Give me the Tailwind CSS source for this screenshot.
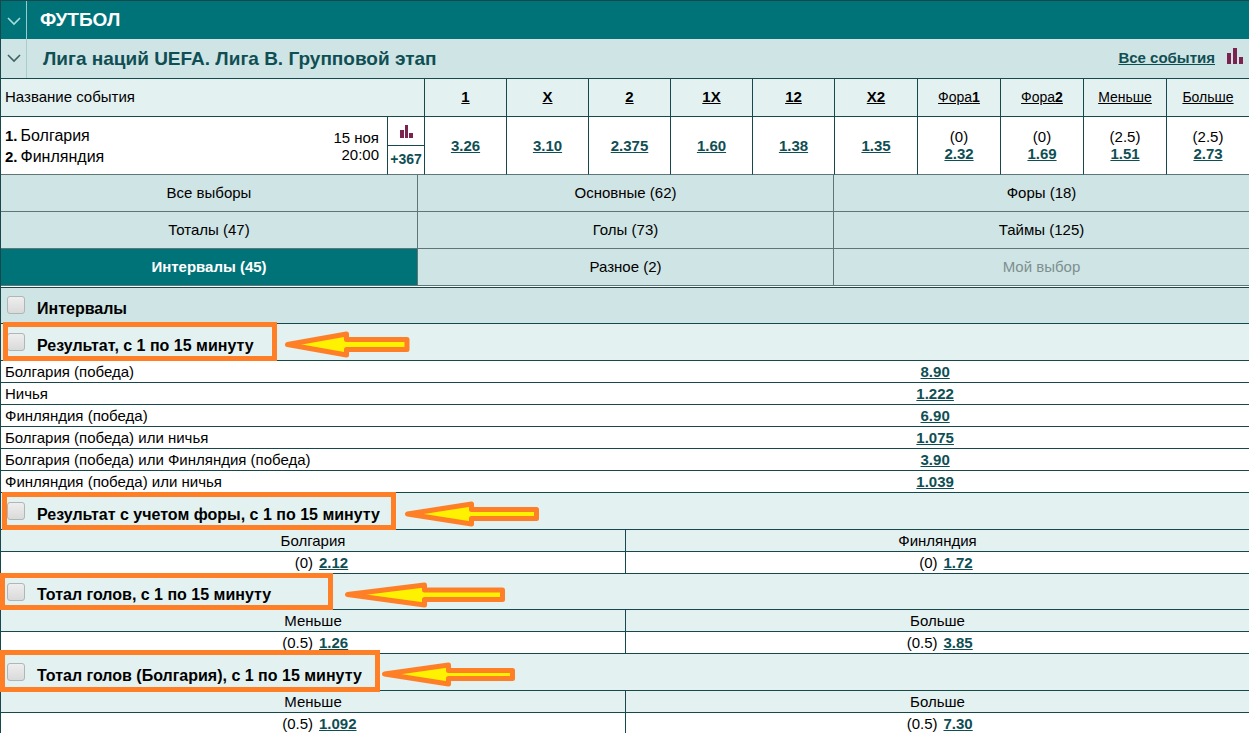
<!DOCTYPE html>
<html lang="ru">
<head>
<meta charset="utf-8">
<meta name="viewport" content="width=device-width, initial-scale=1">
<title>Футбол — Лига наций UEFA</title>
<script src="https://cdn.jsdelivr.net/npm/@tailwindcss/browser@4"></script>
</head>
<body class="bg-white font-['Liberation_Sans',Arial,sans-serif] text-[15px] leading-[17px] text-black">
<main class="border-l border-t border-[#17484b]">

  <header class="flex h-[38px] items-stretch bg-[#007378] text-white">
    <button type="button" aria-label="Свернуть футбол" class="flex w-[26px] items-center justify-center border-r border-[#9cc9cb]">
      <svg class="mt-0.5 h-[9px] w-[14px]" viewBox="0 0 14 9" fill="none" stroke="#a9dcdc" stroke-width="1.6"><path d="M1 1l6 6 6-6"/></svg>
    </button>
    <h1 class="flex items-center pb-0.5 pl-[13px] text-[19px] font-bold">ФУТБОЛ</h1>
  </header>

  <div class="flex h-10 items-stretch border-b border-[#17484b] bg-[#cfe4e4]">
    <button type="button" aria-label="Свернуть лигу" class="flex w-[26px] items-center justify-center border-r border-[#a9cccc]">
      <svg class="h-[9px] w-[14px]" viewBox="0 0 14 9" fill="none" stroke="#3f6265" stroke-width="1.6"><path d="M1 1l6 6 6-6"/></svg>
    </button>
    <h2 class="flex flex-1 items-center pl-4 text-[19px] font-bold text-[#0f4f54]">Лига наций UEFA. Лига B. Групповой этап</h2>
    <div class="flex items-center gap-3 pb-0.5 pr-1.5">
      <a href="#" class="font-bold text-[#0f4f54] underline">Все события</a>
      <svg class="mb-1 h-4 w-4" viewBox="0 0 16 16" fill="#7b2350"><path d="M0 5h4v11H0zM6 0h4v16H6zM12 9h4v7h-4z"/></svg>
    </div>
  </div>

  <table class="w-full table-fixed border-separate border-spacing-0 text-center">
    <colgroup>
      <col><col class="w-[37px]">
      <col class="w-[82px]"><col class="w-[82px]"><col class="w-[82px]"><col class="w-[82px]"><col class="w-[82px]">
      <col class="w-[83px]"><col class="w-[83px]"><col class="w-[83px]"><col class="w-[83px]"><col class="w-[83px]">
    </colgroup>
    <thead>
      <tr class="h-[38px] bg-[#e4f1f1] *:border-b *:border-[#17484b] *:pb-0.5 *:font-normal">
        <th colspan="2" class="pl-1 text-left">Название события</th>
        <th class="border-l"><a href="#" class="font-bold underline">1</a></th>
        <th class="border-l"><a href="#" class="font-bold underline">X</a></th>
        <th class="border-l"><a href="#" class="font-bold underline">2</a></th>
        <th class="border-l"><a href="#" class="font-bold underline">1X</a></th>
        <th class="border-l"><a href="#" class="font-bold underline">12</a></th>
        <th class="border-l"><a href="#" class="font-bold underline">X2</a></th>
        <th class="border-l"><a href="#" class="text-[14px] underline">Фора<b>1</b></a></th>
        <th class="border-l"><a href="#" class="text-[14px] underline">Фора<b>2</b></a></th>
        <th class="border-l"><a href="#" class="text-[14px] underline">Меньше</a></th>
        <th class="border-l"><a href="#" class="text-[14px] underline">Больше</a></th>
      </tr>
    </thead>
    <tbody>
      <tr class="h-[58px] *:border-b *:border-l *:border-b-[#5f7576] *:border-l-[#17484b]">
        <td class="border-l-0! pl-1 pr-2">
          <div class="flex items-center justify-between">
            <div class="text-left leading-[21px]">
              <div class="flex gap-[3px]"><b>1.</b><span class="text-[16px]">Болгария</span></div>
              <div class="flex gap-[3px]"><b>2.</b><span class="text-[16px]">Финляндия</span></div>
            </div>
            <div class="text-right">15 ноя<br>20:00</div>
          </div>
        </td>
        <td>
          <div class="flex h-[29px] items-center justify-center border-b border-[#17484b]">
            <svg class="h-[13px] w-[13px]" viewBox="0 0 13 13" fill="#7b2350"><path d="M0 5h4v8H0zM5 0h3v13H5zM9 8h4v5H9z"/></svg>
          </div>
          <a href="#" class="flex h-7 items-center justify-center pb-0.5 text-[14px] font-bold text-[#0f4f54]">+367</a>
        </td>
        <td><a href="#" class="font-bold text-[#0f4f54] underline">3.26</a></td>
        <td><a href="#" class="font-bold text-[#0f4f54] underline">3.10</a></td>
        <td><a href="#" class="font-bold text-[#0f4f54] underline">2.375</a></td>
        <td><a href="#" class="font-bold text-[#0f4f54] underline">1.60</a></td>
        <td><a href="#" class="font-bold text-[#0f4f54] underline">1.38</a></td>
        <td><a href="#" class="font-bold text-[#0f4f54] underline">1.35</a></td>
        <td class="pb-0.5">(0)<br><a href="#" class="font-bold text-[#0f4f54] underline">2.32</a></td>
        <td class="pb-0.5">(0)<br><a href="#" class="font-bold text-[#0f4f54] underline">1.69</a></td>
        <td class="pb-0.5">(2.5)<br><a href="#" class="font-bold text-[#0f4f54] underline">1.51</a></td>
        <td class="pb-0.5">(2.5)<br><a href="#" class="font-bold text-[#0f4f54] underline">2.73</a></td>
      </tr>
    </tbody>
  </table>

  <nav class="grid grid-cols-3 bg-[#cfe4e4] *:h-[37px] *:border-b *:border-[#5f7576] *:pb-0.5">
    <button type="button">Все выборы</button>
    <button type="button" class="border-l">Основные (62)</button>
    <button type="button" class="border-l">Форы (18)</button>
    <button type="button">Тоталы (47)</button>
    <button type="button" class="border-l">Голы (73)</button>
    <button type="button" class="border-l">Таймы (125)</button>
    <button type="button" class="bg-[#007378] font-bold text-white">Интервалы (45)</button>
    <button type="button" class="border-l">Разное (2)</button>
    <button type="button" disabled class="border-l text-[#7d8f8f]">Мой выбор</button>
  </nav>

  <section class="mt-px border-t border-[#17484b]">
    <div class="flex h-9 items-center gap-3 border-b border-[#17484b] bg-[#cfe4e4] pl-1.5">
      <input id="s0" type="checkbox" class="mb-0.5 size-[18px] appearance-none rounded-[3px] border border-[#b0b5b5] bg-linear-to-b from-[#eeeeee] to-[#dadada]">
      <label for="s0" class="pt-1.5 text-[16px] font-bold">Интервалы</label>
    </div>
  </section>

  <section>
    <div class="relative flex h-[37px] items-center gap-3 border-b border-[#17484b] bg-[#e4f1f1] pl-1.5">
      <input id="s1" type="checkbox" class="size-[18px] appearance-none rounded-[3px] border border-[#b0b5b5] bg-linear-to-b from-[#eeeeee] to-[#dadada]">
      <label for="s1" class="pt-1.5 text-[16px] font-bold">Результат, с 1 по 15 минуту</label>
      <div class="pointer-events-none absolute -top-0.5 left-0.5 z-10 h-[39px] w-[274px] border-5 border-[#ff7f27]"></div>
      <svg class="absolute left-[284px] top-[7px] z-10 h-[27px] w-[125px]" viewBox="0 0 125 27" fill="#fff200" stroke="#ff7f27" stroke-width="5" stroke-linejoin="round"><path d="M2.5 13.5L61.500 3V8.500H122V18.500H61.500V24z"/></svg>
    </div>
    <table class="w-full table-fixed border-separate border-spacing-0">
      <colgroup><col><col class="w-[50.3%]"></colgroup>
      <tbody class="*:h-[22px] *:*:border-b *:*:border-[#17484b]">
        <tr><td class="pl-1">Болгария (победа)</td><td class="text-center"><a href="#" class="font-bold text-[#0f4f54] underline">8.90</a></td></tr>
        <tr><td class="pl-1">Ничья</td><td class="text-center"><a href="#" class="font-bold text-[#0f4f54] underline">1.222</a></td></tr>
        <tr><td class="pl-1">Финляндия (победа)</td><td class="text-center"><a href="#" class="font-bold text-[#0f4f54] underline">6.90</a></td></tr>
        <tr><td class="pl-1">Болгария (победа) или ничья</td><td class="text-center"><a href="#" class="font-bold text-[#0f4f54] underline">1.075</a></td></tr>
        <tr><td class="pl-1">Болгария (победа) или Финляндия (победа)</td><td class="text-center"><a href="#" class="font-bold text-[#0f4f54] underline">3.90</a></td></tr>
        <tr><td class="pl-1">Финляндия (победа) или ничья</td><td class="text-center"><a href="#" class="font-bold text-[#0f4f54] underline">1.039</a></td></tr>
      </tbody>
    </table>
  </section>

  <section>
    <div class="relative flex h-[37px] items-center gap-3 border-b border-[#17484b] bg-[#e4f1f1] pl-1.5">
      <input id="s2" type="checkbox" class="size-[18px] appearance-none rounded-[3px] border border-[#b0b5b5] bg-linear-to-b from-[#eeeeee] to-[#dadada]">
      <label for="s2" class="pt-1.5 text-[16px] font-bold">Результат с учетом форы, с 1 по 15 минуту</label>
      <div class="pointer-events-none absolute -top-px left-px z-10 h-[38px] w-[394px] border-5 border-[#ff7f27]"></div>
      <svg class="absolute left-[404px] top-2 z-10 h-[26px] w-[135px]" viewBox="0 0 135 26" fill="#fff200" stroke="#ff7f27" stroke-width="5" stroke-linejoin="round"><path d="M2.5 13L66.500 3V8.500H131.500V17.500H66.500V23z"/></svg>
    </div>
    <table class="w-full table-fixed border-separate border-spacing-0 text-center">
      <thead><tr class="h-[22px] bg-[#e4f1f1] *:border-b *:border-[#17484b] *:font-normal"><th>Болгария</th><th class="border-l">Финляндия</th></tr></thead>
      <tbody><tr class="h-[22px] *:border-b *:border-[#17484b]">
        <td><div class="grid grid-cols-2"><span class="text-right">(0)</span><span class="pl-1.5 text-left"><a href="#" class="font-bold text-[#0f4f54] underline">2.12</a></span></div></td>
        <td class="border-l"><div class="grid grid-cols-2"><span class="text-right">(0)</span><span class="pl-1.5 text-left"><a href="#" class="font-bold text-[#0f4f54] underline">1.72</a></span></div></td>
      </tr></tbody>
    </table>
  </section>

  <section>
    <div class="relative flex h-9 items-center gap-3 border-b border-[#17484b] bg-[#e4f1f1] pl-1.5">
      <input id="s3" type="checkbox" class="size-[18px] appearance-none rounded-[3px] border border-[#b0b5b5] bg-linear-to-b from-[#eeeeee] to-[#dadada]">
      <label for="s3" class="pt-1.5 text-[16px] font-bold">Тотал голов, с 1 по 15 минуту</label>
      <div class="pointer-events-none absolute -left-px -top-px z-10 h-[37px] w-[333px] border-5 border-[#ff7f27]"></div>
      <svg class="absolute left-[344px] top-2 z-10 h-[26px] w-[160px]" viewBox="0 0 160 26" fill="#fff200" stroke="#ff7f27" stroke-width="5" stroke-linejoin="round"><path d="M2.5 12.500L79.500 3V8H157.500V17.500H79.500V23z"/></svg>
    </div>
    <table class="w-full table-fixed border-separate border-spacing-0 text-center">
      <thead><tr class="h-[22px] bg-[#e4f1f1] *:border-b *:border-[#17484b] *:font-normal"><th>Меньше</th><th class="border-l">Больше</th></tr></thead>
      <tbody><tr class="h-[22px] *:border-b *:border-[#17484b]">
        <td><div class="grid grid-cols-2"><span class="text-right">(0.5)</span><span class="pl-1.5 text-left"><a href="#" class="font-bold text-[#0f4f54] underline">1.26</a></span></div></td>
        <td class="border-l"><div class="grid grid-cols-2"><span class="text-right">(0.5)</span><span class="pl-1.5 text-left"><a href="#" class="font-bold text-[#0f4f54] underline">3.85</a></span></div></td>
      </tr></tbody>
    </table>
  </section>

  <section>
    <div class="relative flex h-[37px] items-center gap-3 border-b border-[#17484b] bg-[#e4f1f1] pl-1.5">
      <input id="s4" type="checkbox" class="size-[18px] appearance-none rounded-[3px] border border-[#b0b5b5] bg-linear-to-b from-[#eeeeee] to-[#dadada]">
      <label for="s4" class="pt-1.5 text-[16px] font-bold">Тотал голов (Болгария), с 1 по 15 минуту</label>
      <div class="pointer-events-none absolute -left-px -top-1 z-10 h-[42px] w-[380px] border-5 border-[#ff7f27]"></div>
      <svg class="absolute left-[381px] top-2 z-10 h-[25px] w-[134px]" viewBox="0 0 134 25" fill="#fff200" stroke="#ff7f27" stroke-width="5" stroke-linejoin="round"><path d="M2.5 12L66.500 3V8.500H130.500V16.500H66.500V22z"/></svg>
    </div>
    <table class="w-full table-fixed border-separate border-spacing-0 text-center">
      <thead><tr class="h-[22px] bg-[#e4f1f1] *:border-b *:border-[#17484b] *:font-normal"><th>Меньше</th><th class="border-l">Больше</th></tr></thead>
      <tbody><tr class="h-[22px] *:border-b *:border-[#17484b]">
        <td><div class="grid grid-cols-2"><span class="text-right">(0.5)</span><span class="pl-1.5 text-left"><a href="#" class="font-bold text-[#0f4f54] underline">1.092</a></span></div></td>
        <td class="border-l"><div class="grid grid-cols-2"><span class="text-right">(0.5)</span><span class="pl-1.5 text-left"><a href="#" class="font-bold text-[#0f4f54] underline">7.30</a></span></div></td>
      </tr></tbody>
    </table>
  </section>
</main>
</body>
</html>
